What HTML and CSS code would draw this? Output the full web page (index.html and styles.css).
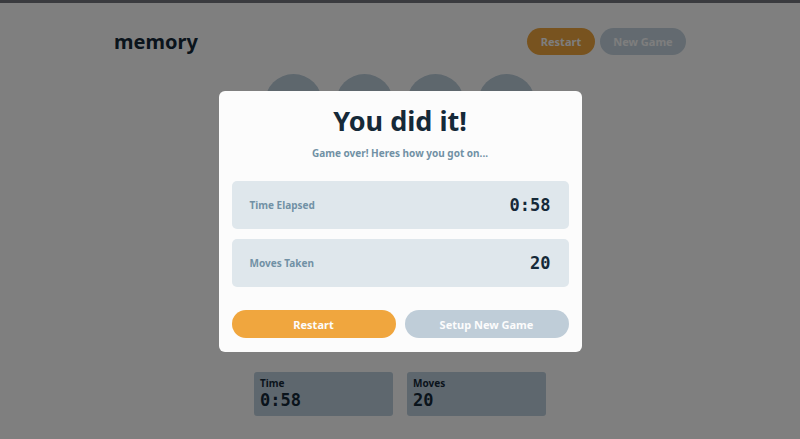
FILE: index.html
```html
<!DOCTYPE html>
<html>
<head>
<meta charset="utf-8">
<link rel="stylesheet" href="styles.css">
</head>
<body>
<div class="topbar"></div>
<div class="page">
  <header class="header">
    <h1 class="logo">memory</h1>
    <div class="header-actions">
      <button class="btn btn-orange">Restart</button>
      <button class="btn btn-grey">New Game</button>
    </div>
  </header>
  <main class="board">
    <div class="cell"></div><div class="cell"></div><div class="cell"></div><div class="cell"></div>
    <div class="cell"></div><div class="cell"></div><div class="cell"></div><div class="cell"></div>
    <div class="cell"></div><div class="cell"></div><div class="cell"></div><div class="cell"></div>
    <div class="cell"></div><div class="cell"></div><div class="cell"></div><div class="cell"></div>
  </main>
  <footer class="stats">
    <div class="stat-card"><span class="stat-label">Time</span><span class="stat-value">0:58</span></div>
    <div class="stat-card"><span class="stat-label">Moves</span><span class="stat-value">20</span></div>
  </footer>
</div>
<div class="overlay">
  <div class="modal">
    <h2 class="modal-title">You did it!</h2>
    <p class="modal-sub">Game over! Heres how you got on...</p>
    <div class="result-row"><span class="result-label">Time Elapsed</span><span class="result-value">0:58</span></div>
    <div class="result-row"><span class="result-label">Moves Taken</span><span class="result-value">20</span></div>
    <div class="modal-actions">
      <button class="mbtn mbtn-orange">Restart</button>
      <button class="mbtn mbtn-grey">Setup New Game</button>
    </div>
  </div>
</div>
</body>
</html>
```

FILE: styles.css
```css
* { box-sizing: border-box; }
html, body { margin: 0; padding: 0; }
body {
  background: #ffffff;
  font-family: "Noto Sans", "DejaVu Sans", sans-serif;
  height: 439px;
  overflow: hidden;
}
.topbar { height: 3px; background: #74767f; }
.page { width: 572px; margin: 0 auto; }
.header {
  display: flex;
  justify-content: space-between;
  align-items: center;
  height: 76px;
  padding-top: 1px;
}
.logo {
  margin: 0;
  font-size: 20px;
  font-weight: 700;
  color: #152938;
}
.header-actions { display: flex; gap: 5px; }
.btn {
  border: none;
  border-radius: 14px;
  height: 27px;
  font-family: "Noto Sans", sans-serif;
  font-weight: 700;
  font-size: 11px;
  color: #fcfcfc;
}
.btn-orange { background: #f0a63e; width: 68px; }
.btn-grey { background: #c6d5e0; width: 86px; }
.board {
  width: 270px;
  margin: -5px auto 0;
  display: grid;
  grid-template-columns: repeat(4, 57px);
  gap: 14px;
}
.cell { width: 57px; height: 57px; border-radius: 50%; background: #bccedb; }
.stats {
  display: flex;
  justify-content: center;
  gap: 14px;
  margin-top: 28px;
}
.stat-card {
  width: 139px;
  height: 44px;
  background: #bccedc;
  border-radius: 3px;
  padding: 5px 6px;
  display: flex;
  flex-direction: column;
}
.stat-label { font-size: 10px; font-weight: 700; color: #152938; line-height: 12px; }
.stat-value {
  font-family: "DejaVu Sans Mono", monospace;
  font-size: 17px;
  font-weight: 700;
  color: #152938;
  line-height: 22px;
}
.overlay {
  position: fixed;
  inset: 0;
  background: rgba(0, 0, 0, 0.5);
  display: flex;
  align-items: center;
  justify-content: center;
  padding-top: 4px;
}
.modal {
  width: 363px;
  background: #fcfcfc;
  border-radius: 6px;
  padding: 12px 13px 14px;
}
.modal-title {
  margin: 0;
  text-align: center;
  font-size: 27px;
  font-weight: 700;
  color: #152938;
  line-height: 36px;
}
.modal-sub {
  margin: 7px 0 21px;
  text-align: center;
  font-size: 10px;
  font-weight: 700;
  color: #7191a5;
  line-height: 14px;
}
.result-row {
  height: 48px;
  background: #dfe7ec;
  border-radius: 5px;
  display: flex;
  align-items: center;
  justify-content: space-between;
  padding: 0 18px;
  margin-bottom: 10px;
}
.result-label { font-size: 10px; font-weight: 700; color: #7191a5; }
.result-value {
  font-family: "DejaVu Sans Mono", monospace;
  font-size: 17px;
  font-weight: 700;
  color: #152938;
}
.modal-actions {
  display: flex;
  gap: 9px;
  margin-top: 23px;
}
.mbtn {
  flex: 1;
  height: 28px;
  border: none;
  border-radius: 14px;
  font-family: "Noto Sans", sans-serif;
  font-size: 11px;
  font-weight: 700;
  color: #fcfcfc;
}
.mbtn-orange { background: #f0a63e; }
.mbtn-grey { background: #bfcdd8; }
```
